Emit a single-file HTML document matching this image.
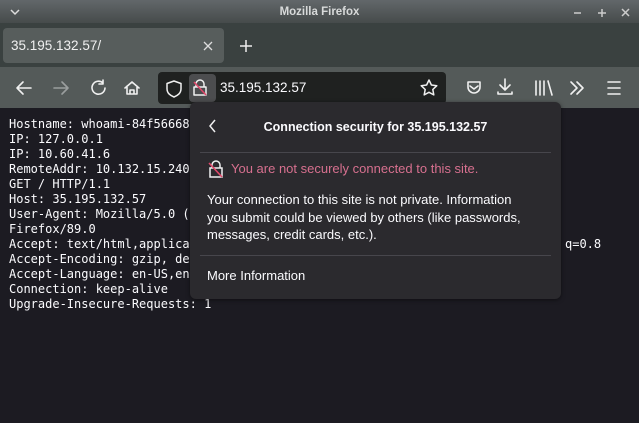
<!DOCTYPE html>
<html><head><style>
*{margin:0;padding:0;box-sizing:border-box}
body{width:639px;height:423px;overflow:hidden;background:#1c1b22;font-family:"Liberation Sans",sans-serif;position:relative}
.abs{position:absolute}
#title{left:0;top:0;width:639px;height:23px;background:linear-gradient(#62676a,#464b4b);color:#d8dada;font-size:11.5px;font-weight:bold;text-align:center;line-height:24px}
#tabs{left:0;top:23px;width:639px;height:44px;background:#3a4140}
#tab{left:3px;top:28px;width:221px;height:35px;background:#575d5c;border-radius:4px;color:#f0f0f0;font-size:13.5px;line-height:35px;padding-left:8px}
#nav{left:0;top:67px;width:639px;height:41px;background:#545a59}
#url{left:158px;top:72px;width:288px;height:32px;background:#1f2120;border-radius:4px}
pre{position:absolute;left:9px;top:117px;font-family:"DejaVu Sans Mono","Liberation Mono",monospace;font-size:12px;line-height:15px;color:#fbfbfe}
#pop{left:190px;top:102px;width:371px;height:197px;background:#2b2a2e;border-radius:6px;box-shadow:0 1px 4px rgba(0,0,0,.5);font-size:13px;color:#fbfbfe}
.hr{position:absolute;left:10px;right:10px;height:1px;background:#47464c}
svg{position:absolute}
</style></head><body>
<div id="title" class="abs">Mozilla Firefox</div>
<svg style="left:10px;top:8px" width="10" height="8"><path d="M1 2l4 4 4-4" stroke="#ddd" stroke-width="1.5" fill="none"/></svg>
<svg style="left:570px;top:8px" width="65" height="10"><path d="M4 5h7M28 5h8M32 1v8M52 1l7 7M59 1l-7 7" stroke="#ccc" stroke-width="1.5"/></svg>
<div id="tabs" class="abs"></div>
<div id="tab" class="abs">35.195.132.57/</div>
<svg style="left:202px;top:40px" width="12" height="12"><path d="M2 2l8 8M10 2l-8 8" stroke="#ddd" stroke-width="1.3"/></svg>
<svg style="left:238px;top:38px" width="16" height="16"><path d="M8 2v12M2 8h12" stroke="#eee" stroke-width="1.5"/></svg>
<div id="nav" class="abs"></div>
<svg style="left:0;top:67px" width="639" height="41" fill="none" stroke-width="1.6" stroke-linecap="round" stroke-linejoin="round">
<path d="M17 21h14M17 21l6-6M17 21l6 6" stroke="#f0f0f0"/>
<path d="M54 21h14M68 21l-6-6M68 21l-6 6" stroke="#9a9e9e"/>
<path d="M103 16a6.5 6.5 0 1 0 2 5M103 13v4h-4" stroke="#f0f0f0"/>
<path d="M125 21l7-6 7 6M127 19v8h10v-8M130 27v-4h4v4" stroke="#f0f0f0"/>
<path d="M468 15h12v5a6 6 0 0 1-12 0z M470 19l4 3 4-3" stroke="#f0f0f0"/>
<path d="M505 12v11M500 18l5 5 5-5M498 25v2h14v-2" stroke="#f0f0f0"/>
<path d="M536 14v14M540 14v14M544 14v14M548 14l4 14" stroke="#f0f0f0"/>
<path d="M571 15l6 6-6 6M577 15l6 6-6 6" stroke="#f0f0f0"/>
<path d="M608 15h12M608 21h12M608 27h12" stroke="#f0f0f0"/>
</svg>
<div id="url" class="abs"></div>
<div class="abs" style="left:189px;top:74px;width:27px;height:28px;background:#4c4d4f;border-radius:4px"></div>
<svg style="left:158px;top:72px" width="290" height="32" fill="none" stroke-width="1.5" stroke-linejoin="round">
<path d="M16 9l7 2.5v5c0 5-3.5 7-7 8.5-3.5-1.5-7-3.5-7-8.5v-5z" stroke="#f0f0f0"/>
<path d="M38 15v-3a4 4 0 0 1 8 0v3M36 15h12v8h-12z" stroke="#f0f0f0"/>
<path d="M36 10l12 13" stroke="#e0476a" stroke-width="1.6"/>
<path d="M271 8l2.4 5 5.4.7-4 3.8 1 5.4-4.8-2.6-4.8 2.6 1-5.4-4-3.8 5.4-.7z" stroke="#f0f0f0"/>
</svg>
<div class="abs" style="left:220px;top:80px;color:#fbfbfe;font-size:13.5px">35.195.132.57</div>
<pre>Hostname: whoami-84f56668
IP: 127.0.0.1
IP: 10.60.41.6
RemoteAddr: 10.132.15.240
GET / HTTP/1.1
Host: 35.195.132.57
User-Agent: Mozilla/5.0 (
Firefox/89.0
Accept: text/html,applica
Accept-Encoding: gzip, de
Accept-Language: en-US,en
Connection: keep-alive
Upgrade-Insecure-Requests: 1</pre>
<div class="abs" style="left:565px;top:237px;font-family:'DejaVu Sans Mono',monospace;font-size:12px;color:#fbfbfe">q=0.8</div>
<div id="pop" class="abs">
<svg style="left:18px;top:16px" width="10" height="16"><path d="M7 2l-5 6 5 6" stroke="#f0f0f0" stroke-width="1.5" fill="none"/></svg>
<div class="abs" style="left:0;width:371px;top:18px;text-align:center;font-weight:bold;font-size:12.5px">Connection security for 35.195.132.57</div>
<div class="hr" style="top:50px"></div>
<svg style="left:16px;top:57px" width="20" height="20" fill="none" stroke-width="1.5"><path d="M6 9v-3a4 4 0 0 1 8 0v3M4 9h12v9h-12z" stroke="#f0f0f0"/><path d="M3 4l13 14" stroke="#e0476a" stroke-width="1.6"/></svg>
<div class="abs" style="left:41px;top:59px;color:#d7708f">You are not securely connected to this site.</div>
<div class="abs" style="left:17px;top:89px;line-height:17.5px;width:320px">Your connection to this site is not private. Information you submit could be viewed by others (like passwords, messages, credit cards, etc.).</div>
<div class="hr" style="top:153px"></div>
<div class="abs" style="left:17px;top:166px">More Information</div>
</div>
</body></html>
